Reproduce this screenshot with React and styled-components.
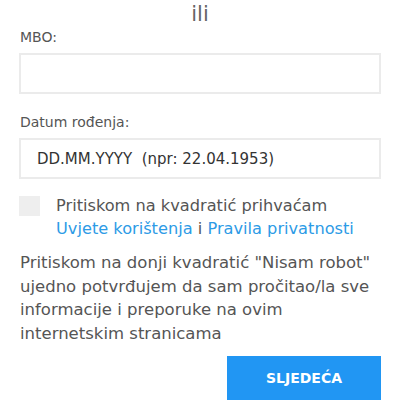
import React from "react";
import styled, { createGlobalStyle } from "styled-components";

const Global = createGlobalStyle`
  body {
    margin: 0;
    background: #fff;
    font-family: "DejaVu Sans", Verdana, sans-serif;
    color: #555;
  }
`;

const Form = styled.div`
  width: 400px;
  padding: 0 19px 0 19px;
  box-sizing: border-box;
  display: flex;
  flex-direction: column;
`;

const Title = styled.div`
  text-align: center;
  font-size: 21px;
  line-height: 28px;
  color: #666;
`;

const Label = styled.label`
  display: block;
  font-size: 14px;
  line-height: 16px;
  color: #555;
  margin: ${(p) => p.$top || 0}px 0 0 1px;
`;

const Input = styled.input`
  display: block;
  box-sizing: border-box;
  width: 100%;
  height: 41px;
  margin-top: 8px;
  border: 2px solid #ebebeb;
  padding: 0 16px;
  font-family: inherit;
  font-size: 15px;
  color: #333;
  outline: none;
  &::placeholder {
    color: #333;
  }
`;

const Consent = styled.div`
  display: flex;
  gap: 16px;
  margin-top: 15px;
`;

const Box = styled.span`
  flex: none;
  width: 21px;
  height: 20px;
  background: #eee;
  margin-top: 2px;
`;

const ConsentText = styled.div`
  font-size: 16.2px;
  line-height: 23px;
  color: #555;
`;

const Link = styled.a`
  color: #2d9be6;
  text-decoration: none;
`;

const Note = styled.p`
  margin: 11px 0 0 1px;
  font-size: 16.5px;
  line-height: 23.5px;
  color: #555;
`;

const Actions = styled.div`
  display: flex;
  justify-content: flex-end;
  margin-top: 11px;
`;

const Button = styled.button`
  width: 154px;
  height: 44px;
  border: none;
  background: #2196f3;
  color: #fff;
  font-family: "DejaVu Sans", Verdana, sans-serif;
  font-weight: bold;
  font-size: 14px;
`;

export default function App() {
  return (
    <>
      <Global />
      <Form>
        <Title>ili</Title>
        <Label $top={1}>MBO:</Label>
        <Input type="text" />
        <Label $top={20}>Datum rođenja:</Label>
        <Input type="text" placeholder="DD.MM.YYYY  (npr: 22.04.1953)" />
        <Consent>
          <Box />
          <ConsentText>
            Pritiskom na kvadratić prihvaćam
            <br />
            <Link href="#">Uvjete korištenja</Link> i{" "}
            <Link href="#">Pravila privatnosti</Link>
          </ConsentText>
        </Consent>
        <Note>
          Pritiskom na donji kvadratić "Nisam robot" ujedno potvrđujem da sam
          pročitao/la sve informacije i preporuke na ovim internetskim
          stranicama
        </Note>
        <Actions>
          <Button>SLJEDEĆA</Button>
        </Actions>
      </Form>
    </>
  );
}
